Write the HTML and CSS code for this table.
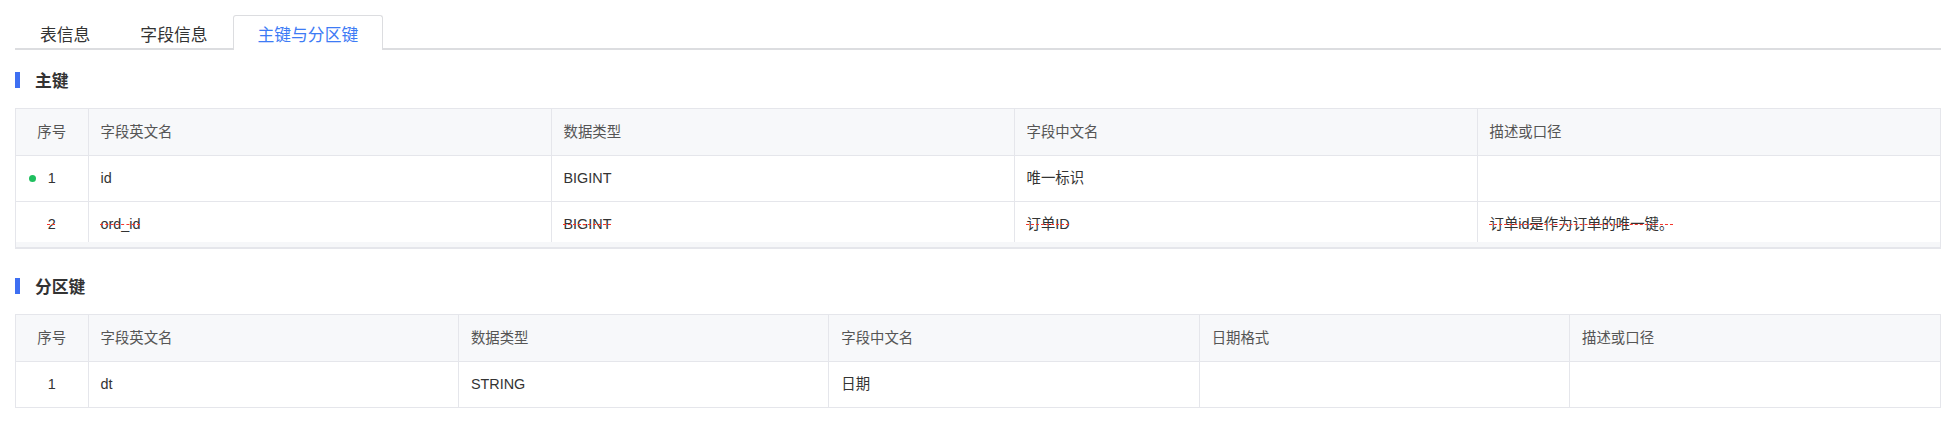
FILE: index.html
```html
<!DOCTYPE html>
<html lang="zh-CN">
<head>
<meta charset="utf-8">
<title>主键与分区键</title>
<link rel="stylesheet" href="styles.css">
</head>
<body>
<div class="page">
  <div class="tabs">
    <div class="tab">表信息</div>
    <div class="tab">字段信息</div>
    <div class="tab active">主键与分区键</div>
  </div>

  <div class="section-title first"><span class="bar"></span><span class="title-text">主键</span></div>
  <div class="table-wrap has-scroll">
    <table class="grid">
      <colgroup><col class="col-idx"><col><col><col><col></colgroup>
      <thead>
        <tr><th class="idx">序号</th><th>字段英文名</th><th>数据类型</th><th>字段中文名</th><th>描述或口径</th></tr>
      </thead>
      <tbody>
        <tr><td class="idx"><span class="dot"></span>1</td><td>id</td><td>BIGINT</td><td>唯一标识</td><td></td></tr>
        <tr class="deleted"><td class="idx"><span class="strike">2</span></td><td><span class="strike">ord_id</span></td><td><span class="strike">BIGINT</span></td><td><span class="strike">订单ID</span></td><td><span class="strike">订单id是作为订单的唯一键。</span></td></tr>
      </tbody>
    </table>
  </div>

  <div class="section-title second"><span class="bar"></span><span class="title-text">分区键</span></div>
  <div class="table-wrap">
    <table class="grid">
      <colgroup><col class="col-idx"><col><col><col><col><col></colgroup>
      <thead>
        <tr><th class="idx">序号</th><th>字段英文名</th><th>数据类型</th><th>字段中文名</th><th>日期格式</th><th>描述或口径</th></tr>
      </thead>
      <tbody>
        <tr><td class="idx">1</td><td>dt</td><td>STRING</td><td>日期</td><td></td><td></td></tr>
      </tbody>
    </table>
  </div>
</div>
</body>
</html>
```

FILE: styles.css
```css
* { box-sizing: border-box; }
html, body { margin: 0; padding: 0; background: #ffffff; }
body {
  font-family: "Liberation Sans", "Noto Sans CJK SC", sans-serif;
  color: #333333;
}
.page {
  padding: 15px 14px 0 15px;
}
.tabs {
  display: flex;
  border-bottom: 2px solid #dcdde0;
}
.tab {
  height: 35px;
  margin-bottom: -2px;
  padding: 8px 24px 3px;
  line-height: 23px;
  font-size: 16.8px;
  color: #333333;
  border: 1px solid transparent;
  border-bottom: none;
  border-radius: 3px 3px 0 0;
}
.tab.active {
  color: #3d7bf5;
  background: #ffffff;
  border-color: #dcdde0;
}
.section-title {
  display: flex;
  align-items: flex-start;
  height: 16px;
  gap: 15px;
}
.section-title.first { margin-top: 22px; margin-bottom: 20px; }
.section-title.second { margin-top: 29px; margin-bottom: 20px; }
.bar {
  width: 5px;
  height: 16px;
  background: #3e6ff2;
}
.title-text {
  margin-top: 2px;
  font-size: 16.8px;
  font-weight: bold;
  line-height: 16px;
  color: #333333;
}
.table-wrap {
  position: relative;
  border: 1px solid #e5e6eb;
}
.table-wrap.has-scroll {
  border-bottom-width: 2px;
}
.table-wrap.has-scroll::after {
  content: "";
  position: absolute;
  left: 0;
  right: 0;
  bottom: 0;
  height: 5px;
  background: #f6f7f9;
}
.grid {
  width: 100%;
  border-collapse: collapse;
  border-style: hidden;
  table-layout: fixed;
  font-size: 14.4px;
  line-height: 20px;
}
.col-idx { width: 72px; }
.grid th, .grid td {
  height: 46px;
  padding: 0 12px;
  border: 1px solid #e5e6eb;
  text-align: left;
  font-weight: normal;
  white-space: nowrap;
  overflow: hidden;
  text-overflow: ellipsis;
}
.grid th {
  background: #f7f8fa;
  color: #555555;
}
.grid td { color: #333333; }
.grid .idx {
  position: relative;
  text-align: center;
}
.dot {
  position: absolute;
  left: 13px;
  top: 50%;
  width: 7px;
  height: 7px;
  margin-top: -3px;
  border-radius: 50%;
  background: #1fbf5f;
}
.strike {
  text-decoration-line: line-through;
  text-decoration-style: dashed;
  text-decoration-color: #f5362d;
  text-decoration-thickness: 1px;
}
```
